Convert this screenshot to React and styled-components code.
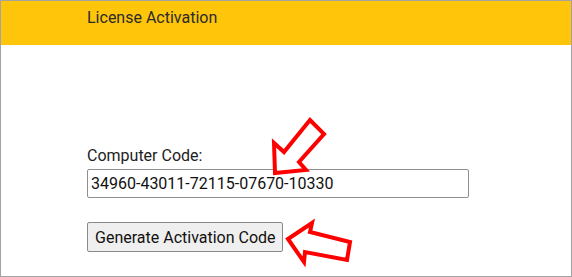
import React from "react";
import styled, { createGlobalStyle } from "styled-components";

const Global = createGlobalStyle`
  html, body { margin: 0; padding: 0; background: #fff; }
  body { font-family: Roboto, "Liberation Sans", Arial, sans-serif; }
  * { box-sizing: border-box; }
`;

const Frame = styled.div`
  position: relative;
  width: 572px;
  height: 277px;
  border: 1px solid #a3a3a3;
  background: #fff;
  overflow: hidden;
`;

const Header = styled.header`
  height: 44px;
  background: #ffc50a;
  display: flex;
  align-items: flex-start;
  padding: 7px 0 0 86px;
`;

const Title = styled.h1`
  margin: 0;
  font-family: Roboto, sans-serif;
  font-weight: 400;
  font-size: 16px;
  line-height: 20px;
  color: #2b2b2b;
`;

const Content = styled.main`
  display: flex;
  flex-direction: column;
  align-items: flex-start;
  padding: 101px 0 0 86px;
`;

const Label = styled.label`
  font-size: 16px;
  line-height: 19px;
  color: #222;
  margin-bottom: 4px;
`;

const CodeInput = styled.input`
  width: 382px;
  height: 29px;
  border: 1px solid #8f8f8f;
  border-radius: 2px;
  padding: 0 3px;
  font-family: Roboto, sans-serif;
  font-size: 16px;
  color: #111;
  background: #fff;
  outline: none;
  margin-bottom: 24px;
`;

const Button = styled.button`
  height: 30px;
  padding: 0 6px 0 7px;
  border: 1px solid #8a8a8a;
  border-radius: 2px;
  background: #efefef;
  font-family: Roboto, sans-serif;
  font-size: 16px;
  color: #111;
`;

const Overlay = styled.svg`
  position: absolute;
  left: 0;
  top: 0;
  pointer-events: none;
`;

export default function App() {
  return (
    <>
      <Global />
      <Frame>
        <Header>
          <Title>License Activation</Title>
        </Header>
        <Content>
          <Label htmlFor="cc">Computer Code:</Label>
          <CodeInput id="cc" readOnly value="34960-43011-72115-07670-10330" />
          <Button>Generate Activation Code</Button>
        </Content>
        <Overlay width="572" height="277" viewBox="-1 -1 572 277">
          <polygon
            points="273,171 272,141 282,150 308,118 322,132 297,160 304,168"
            fill="#fff"
            stroke="#ff0000"
            strokeWidth="4"
            strokeLinejoin="miter"
          />
          <polygon
            points="286,237 310,221 308,230 348,240 345,258 303,250 302,260"
            fill="#fff"
            stroke="#ff0000"
            strokeWidth="4"
            strokeLinejoin="miter"
          />
        </Overlay>
      </Frame>
    </>
  );
}
